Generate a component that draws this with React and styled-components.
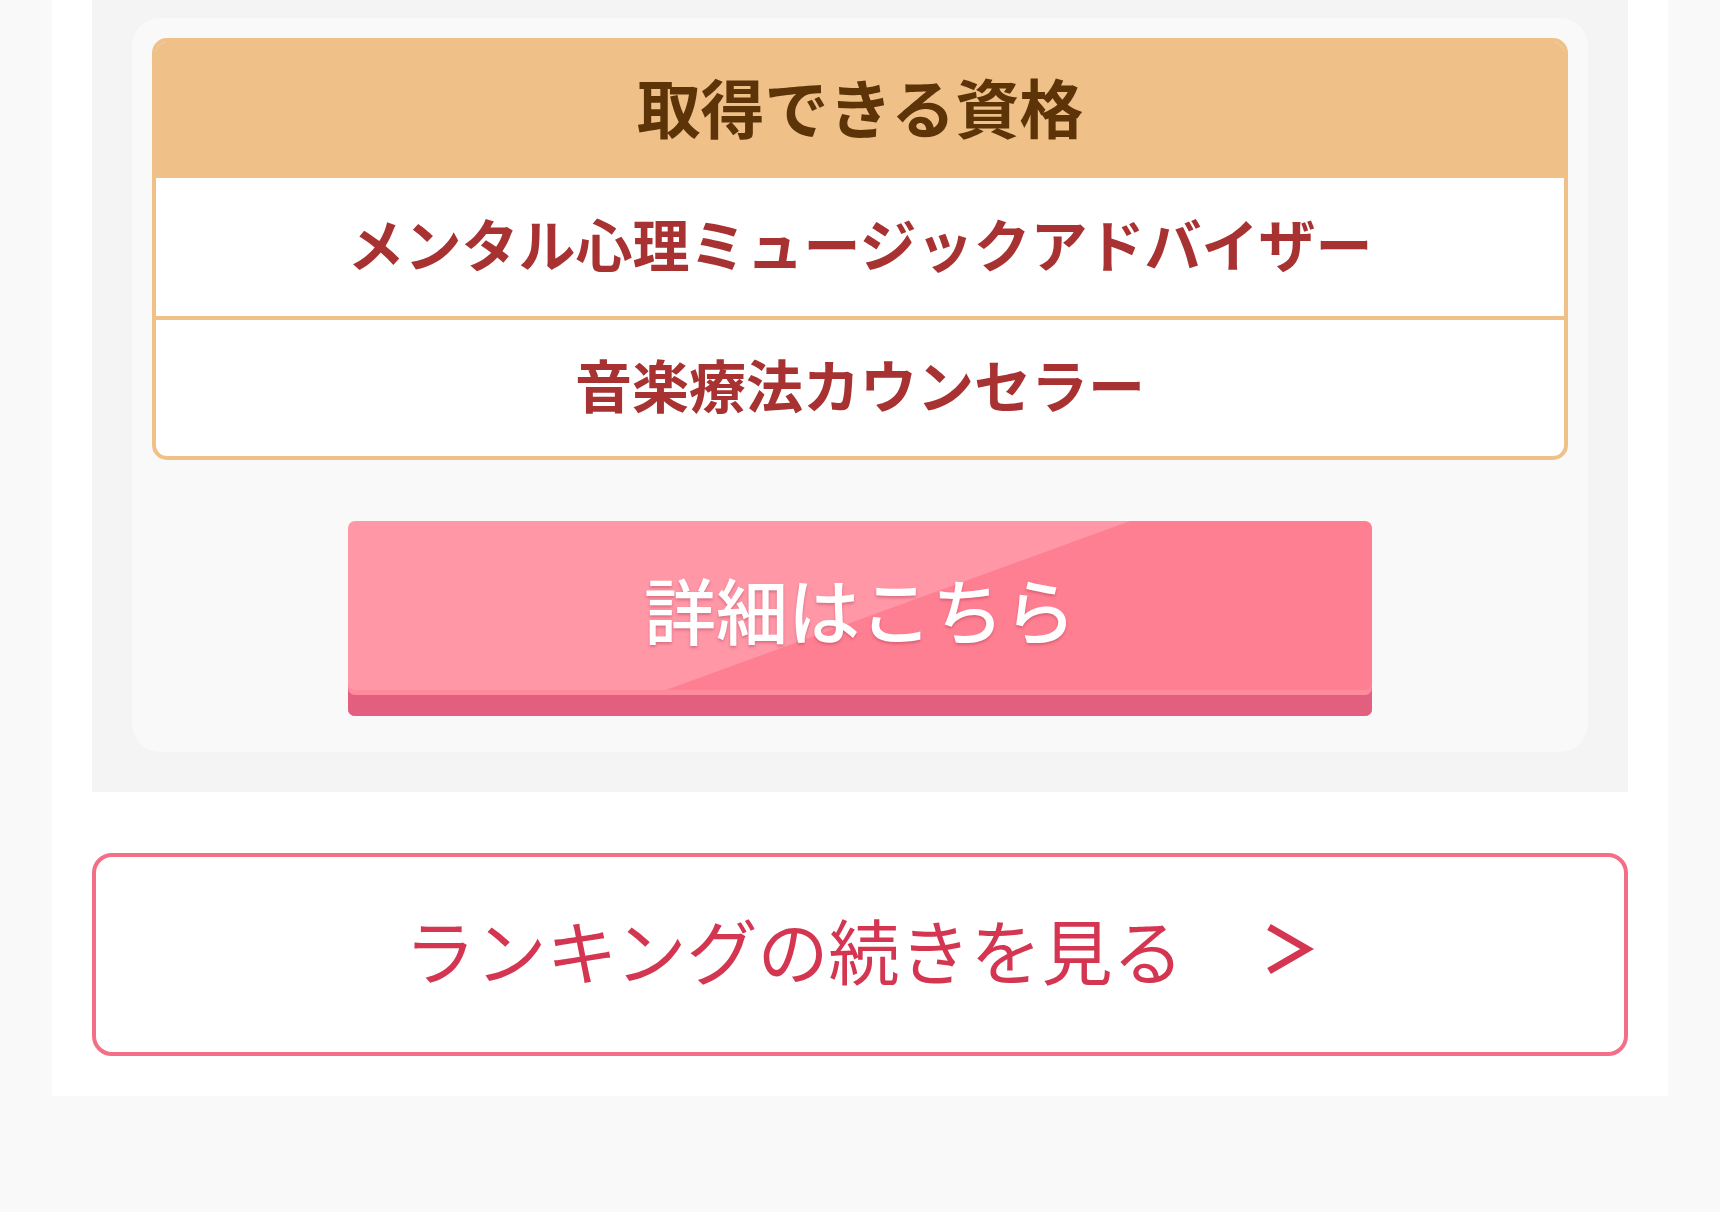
import React from "react"
import styled, { createGlobalStyle } from "styled-components"

const GlobalStyle = createGlobalStyle`
    body {
        margin: 0;
        background: #f9f9f9;
        font-family: "Noto Sans CJK JP", "Noto Sans", sans-serif;
    }
`

const Page = styled.main`
    width: 1616px;
    margin: 0 auto;
    background: #fff;
    padding: 0 40px 40px;
    box-sizing: border-box;
`

const Section = styled.section`
    background: #f4f4f4;
    padding: 18px 40px 40px;
`

const Card = styled.div`
    background: #f9f9f9;
    border-radius: 28px;
    padding: 20px 20px 36px;
`

const QualTable = styled.div`
    border: 4px solid #f0c089;
    border-radius: 15px;
    overflow: hidden;
    background: #fff;
`

const QualHead = styled.h3`
    margin: 0;
    height: 136px;
    padding-bottom: 11px;
    box-sizing: border-box;
    display: flex;
    align-items: center;
    justify-content: center;
    background: #f0c089;
    color: #5c3408;
    font-size: 64px;
    font-weight: 700;
    line-height: 1;
`

const QualRow = styled.div`
    display: flex;
    align-items: center;
    justify-content: center;
    height: ${props => props.$h}px;
    padding-bottom: 10px;
    box-sizing: border-box;
    border-top: ${props => (props.$divider ? "4px solid #f0c089" : "none")};
    color: #a83232;
    font-size: 57px;
    font-weight: 700;
    line-height: 1;
`

const DetailButton = styled.a`
    display: flex;
    align-items: center;
    justify-content: center;
    width: 1024px;
    height: 195px;
    margin: 61px auto 0;
    padding-bottom: 21px;
    box-sizing: border-box;
    border-radius: 7px;
    background: linear-gradient(160deg, #ff97a7 267px, #ff7f92 268px);
    box-shadow: inset 0 -21px 0 #e35f7f, inset 0 -26px 0 #ff8a9b;
    color: #fff;
    font-size: 72px;
    font-weight: 500;
    line-height: 1;
    text-decoration: none;
    text-shadow: 0 2px 3px rgba(150, 40, 60, 0.35);
`

const RankingButton = styled.a`
    display: flex;
    align-items: center;
    justify-content: center;
    gap: 82px;
    height: 203px;
    margin-top: 61px;
    padding-bottom: 12px;
    box-sizing: border-box;
    border: 4px solid #f26f87;
    border-radius: 20px;
    background: #fff;
    color: #d43652;
    font-size: 71px;
    font-weight: 400;
    line-height: 1;
    text-decoration: none;
`

const Chevron = () => (
    <svg width="50" height="52" viewBox="0 0 50 52">
        <polyline points="4,4 42,26 4,48" fill="none" stroke="#d43652" strokeWidth="7" />
    </svg>
)

export default function App() {
    return (
        <>
            <GlobalStyle />
            <Page>
                <Section>
                    <Card>
                        <QualTable>
                            <QualHead>取得できる資格</QualHead>
                            <QualRow $h={138}>メンタル心理ミュージックアドバイザー</QualRow>
                            <QualRow $h={140} $divider>音楽療法カウンセラー</QualRow>
                        </QualTable>
                        <DetailButton href="#">詳細はこちら</DetailButton>
                    </Card>
                </Section>
                <RankingButton href="#">
                    <span>ランキングの続きを見る</span>
                    <Chevron />
                </RankingButton>
            </Page>
        </>
    )
}
